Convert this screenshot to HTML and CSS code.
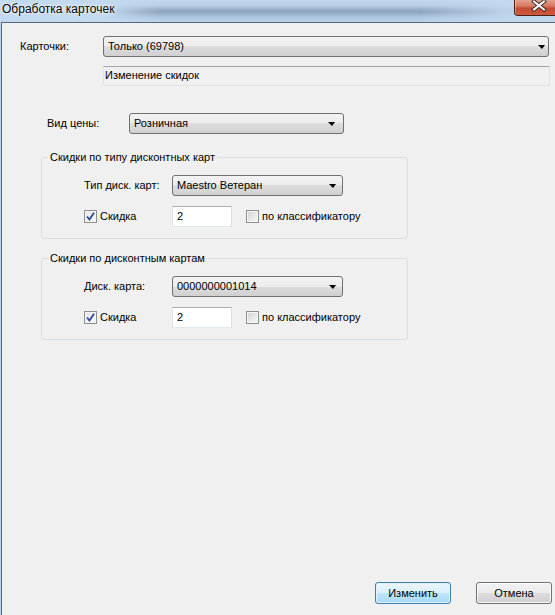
FILE: index.html
```html
<!DOCTYPE html>
<html>
	<head>
		<meta charset="UTF-8">
		<title>Обработка карточек</title>
		<link rel="stylesheet" href="styles.css">
	</head>
	<body>
		<div class="window">
			<div class="titlebar">
				<div class="title">Обработка карточек</div>
				<div class="close">
					<svg width="41" height="16" viewBox="0 0 41 16">
						<path d="M19 1.5 L29 9.5 M29 1.5 L19 9.5" stroke="#3a2a28" stroke-width="4" stroke-linecap="square" fill="none"/>
						<path d="M19 1.5 L29 9.5 M29 1.5 L19 9.5" stroke="#fff" stroke-width="2" stroke-linecap="square" fill="none"/>
					</svg>
				</div>
			</div>
			<div class="client">
				<div class="row row-cards">
					<span class="label w-cards">Карточки:</span>
					<div class="combo combo-cards"><span class="combo-text">Только (69798)</span><i class="arrow"></i></div>
				</div>
				<div class="memo">Изменение скидок</div>
				<div class="row row-price">
					<span class="label w-price">Вид цены:</span>
					<div class="combo combo-price"><span class="combo-text">Розничная</span><i class="arrow"></i></div>
				</div>

				<fieldset class="group group-type">
					<legend>Скидки по типу дисконтных карт</legend>
					<div class="row row-inner">
						<span class="label w-inner">Тип диск. карт:</span>
						<div class="combo combo-inner"><span class="combo-text">Maestro Ветеран</span><i class="arrow"></i></div>
					</div>
					<div class="row row-check">
						<label class="check w-inner"><span class="box checked"><svg width="9" height="9" viewBox="0 0 9 9"><path d="M1 4.5 L3.5 7.5 L8 0.8" stroke="#2a4a9c" stroke-width="1.8" fill="none"/></svg></span>Скидка</label>
						<div class="edit">2</div>
						<label class="check check-class"><span class="box"></span>по классификатору</label>
					</div>
				</fieldset>

				<fieldset class="group group-card">
					<legend>Скидки по дисконтным картам</legend>
					<div class="row row-inner">
						<span class="label w-inner">Диск. карта:</span>
						<div class="combo combo-inner"><span class="combo-text">0000000001014</span><i class="arrow"></i></div>
					</div>
					<div class="row row-check">
						<label class="check w-inner"><span class="box checked"><svg width="9" height="9" viewBox="0 0 9 9"><path d="M1 4.5 L3.5 7.5 L8 0.8" stroke="#2a4a9c" stroke-width="1.8" fill="none"/></svg></span>Скидка</label>
						<div class="edit">2</div>
						<label class="check check-class"><span class="box"></span>по классификатору</label>
					</div>
				</fieldset>

				<div class="buttons">
					<div class="btn btn-default">Изменить</div>
					<div class="btn">Отмена</div>
				</div>
			</div>
		</div>
	</body>
</html>
```

FILE: styles.css
```css
*{
	margin: 0;
	padding: 0;
	box-sizing: border-box;
}
html,body{
	width: 555px;
	height: 615px;
	overflow: hidden;
}
body{
	font-family: "Liberation Sans", Arial, sans-serif;
	font-size: 11px;
	line-height: 13px;
	color: #000;
	background: #b9d1ea;
}
.window{
	display: flex;
	flex-direction: column;
	height: 615px;
}

/* заголовок окна (aero) */
.titlebar{
	height: 22px;
	display: flex;
	align-items: flex-start;
	background:
		linear-gradient(to right, #c3d9ef 0, #c3d9ef 105px, rgba(195,217,239,0) 160px, rgba(195,217,239,0) 420px, rgba(195,217,239,.85) 505px),
		linear-gradient(#c0d7ee 0, #b8cfe7 25%, #96acc4 45%, #8fa5bd 55%, #aac2dc 75%, #bcd4ec 100%);
}
.title{
	font-size: 12px;
	line-height: 15px;
	padding: 2px 0 0 2px;
	text-shadow: 0 0 5px #fff, 0 0 2px #fff;
}
.close{
	margin-left: auto;
	width: 41px;
	height: 16px;
	border-left: 1px solid #4a2219;
	border-bottom: 1px solid #4a2219;
	border-bottom-left-radius: 4px;
	background: linear-gradient(#e3a08f 0, #d77a63 40%, #c44a30 55%, #cf5a3c 100%);
	box-shadow: inset 1px 0 0 rgba(255,255,255,.35);
}
.close svg{
	display: block;
}

/* рабочая область */
.client{
	flex: 1;
	display: flex;
	flex-direction: column;
	align-items: flex-start;
	margin-left: 1px;
	border-left: 1px solid #56687e;
	border-top: 1px solid #56687e;
	background: #f0f0f0;
	padding: 13px 0 11px 0;
}
.row{
	display: flex;
	align-items: center;
}
.label{
	flex-shrink: 0;
}
.w-cards{ width: 83px; }
.w-price{ width: 82px; }
.w-inner{ width: 88px; }

.row-cards{
	margin-left: 18px;
}
.row-price{
	margin-top: 27px;
	margin-left: 45px;
}

/* выпадающий список */
.combo{
	height: 21px;
	display: flex;
	align-items: center;
	border: 1px solid #707070;
	border-radius: 3px;
	background: linear-gradient(#f3f3f3 0, #ececec 50%, #dddddd 50%, #d0d0d0 100%);
	padding: 0 5px 0 4px;
}
.combo-text{
	flex: 1;
	white-space: nowrap;
}
.arrow{
	width: 0;
	height: 0;
	border-left: 4px solid transparent;
	border-right: 3px solid transparent;
	border-top: 4px solid #000;
}
.combo-cards{ width: 446px; padding-right: 3px; }
.combo-price{ width: 215px; padding-right: 8px; }
.combo-inner{ width: 171px; padding-right: 6px; }

.memo{
	margin: 9px 0 0 101px;
	width: 447px;
	height: 20px;
	border: 1px solid #e3e3e3;
	border-top-color: #a6a6a6;
	padding: 2px 0 0 1px;
}

/* групповые рамки */
.group{
	width: 367px;
	margin-left: 39px;
	border: 1px solid #d5dfe5;
	border-radius: 3px;
	padding: 0 0 11px 0;
	min-inline-size: 0;
}
.group legend{
	margin-left: 6px;
	padding: 0 2px;
}
.group-type{ margin-top: 17px; }
.group-card{ margin-top: 13px; }
.row-inner{
	margin: 11px 0 0 42px;
}
.row-check{
	margin: 10px 0 0 42px;
}

.check{
	display: flex;
	align-items: center;
}
.box{
	width: 13px;
	height: 13px;
	border: 1px solid #8e8f8f;
	background: linear-gradient(135deg, #cfd2d6 0, #e6e6e6 50%, #f8f8f8 100%);
	box-shadow: inset 0 0 0 1px #f4f4f4;
	margin-right: 3px;
	display: flex;
	align-items: center;
	justify-content: center;
}
.box.checked{
	background: linear-gradient(135deg, #e1e3e7 0, #f2f2f2 60%, #fcfcfc 100%);
}
.box svg{
	display: block;
}
.edit{
	width: 60px;
	height: 21px;
	background: #fff;
	border: 1px solid #e3e9ef;
	border-top-color: #abadb3;
	border-left-color: #e2e3ea;
	border-right-color: #dbdfe6;
	padding: 3px 0 0 4px;
}
.check-class{
	margin-left: 14px;
}

/* кнопки */
.buttons{
	margin-top: auto;
	align-self: stretch;
	display: flex;
	justify-content: flex-end;
	padding-right: 3px;
}
.btn{
	width: 76px;
	height: 22px;
	display: flex;
	align-items: center;
	justify-content: center;
	border: 1px solid #707070;
	border-radius: 3px;
	background: linear-gradient(#f2f2f2 0, #ebebeb 50%, #dddddd 50%, #cfcfcf 100%);
	box-shadow: inset 0 0 0 1px #fbfbfb;
}
.btn + .btn{
	margin-left: 25px;
}
.btn-default{
	border-color: #3c7fb1;
	background: linear-gradient(#eaf6fd 0, #d9f0fc 50%, #bee6fd 50%, #a7d9f5 100%);
	box-shadow: inset 0 0 0 1px #e0f2fc;
}
```
